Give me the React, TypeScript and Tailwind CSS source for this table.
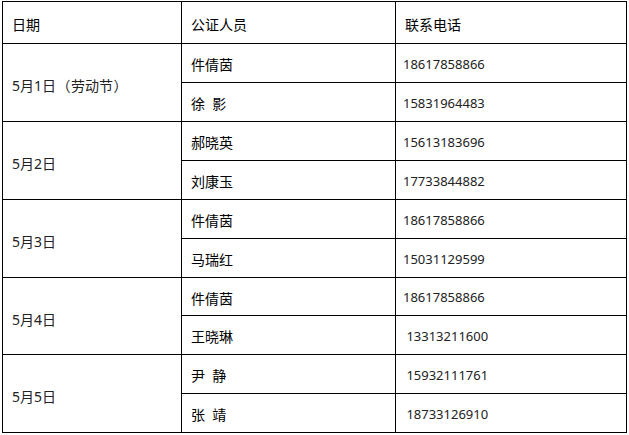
import React from "react";

type Group = {
  date: React.ReactNode;
  key: string;
  rows: { name: string; phone: string; h: string }[];
};

// full-width brackets, centred in their box as in the source
const Paren = ({ ch }: { ch: string }) => (
  <span className="inline-block w-[15px] text-center font-['Noto_Sans_CJK_TC',sans-serif]">{ch}</span>
);

const groups: Group[] = [
  {
    key: "1",
    date: (
      <>
        5月1日
        <Paren ch="（" />
        劳动节
        <Paren ch="）" />
      </>
    ),
    rows: [
      { name: "件倩茵", phone: "18617858866", h: "h-[38px]" },
      { name: "徐  影", phone: "15831964483", h: "h-[38px]" },
    ],
  },
  {
    key: "2",
    date: "5月2日",
    rows: [
      { name: "郝晓英", phone: "15613183696", h: "h-[38px]" },
      { name: "刘康玉", phone: "17733844882", h: "h-[38px]" },
    ],
  },
  {
    key: "3",
    date: "5月3日",
    rows: [
      { name: "件倩茵", phone: "18617858866", h: "h-[38px]" },
      { name: "马瑞红", phone: "15031129599", h: "h-[38px]" },
    ],
  },
  {
    key: "4",
    date: "5月4日",
    rows: [
      { name: "件倩茵", phone: "18617858866", h: "h-[37px]" },
      { name: "王晓琳", phone: " 13313211600", h: "h-[38px]" },
    ],
  },
  {
    key: "5",
    date: "5月5日",
    rows: [
      { name: "尹  静", phone: " 15932111761", h: "h-[38px]" },
      { name: "张  靖", phone: " 18733126910", h: "h-[38px]" },
    ],
  },
];

const font = "font-['Noto_Sans','Noto_Sans_CJK_SC',sans-serif]";

const App = () => {
  return (
    <div className="min-h-[435px] w-[629px] bg-white pl-[2px] pt-[1px]">
      <div
        className={`grid w-[625px] grid-cols-[178px_213px_230px] gap-px bg-black p-px text-[14px] text-black ${font}`}
      >
        <div className="flex h-[41px] items-center bg-white pl-[9px] pt-[3px]">日期</div>
        <div className="flex h-[41px] items-center bg-white pl-[9px] pt-[3px]">公证人员</div>
        <div className="flex h-[41px] items-center bg-white pl-[9px] pt-[3px]">联系电话</div>

        {groups.map((g) => (
          <React.Fragment key={g.key}>
            <div className="row-span-2 flex items-center bg-white pl-[9px] pt-[6px] text-[#222]">
              <span>{g.date}</span>
            </div>
            {g.rows.map((r, i) => (
              <React.Fragment key={i}>
                <div
                  className={`col-start-2 flex items-center whitespace-pre bg-white pl-[9px] pt-[3px] ${r.h}`}
                >
                  {r.name}
                </div>
                <div
                  className={`flex items-center whitespace-pre bg-white pl-[7px] pt-[3px] text-[13px] text-[#222] ${r.h}`}
                >
                  {r.phone}
                </div>
              </React.Fragment>
            ))}
          </React.Fragment>
        ))}
      </div>
    </div>
  );
};

export default App;
